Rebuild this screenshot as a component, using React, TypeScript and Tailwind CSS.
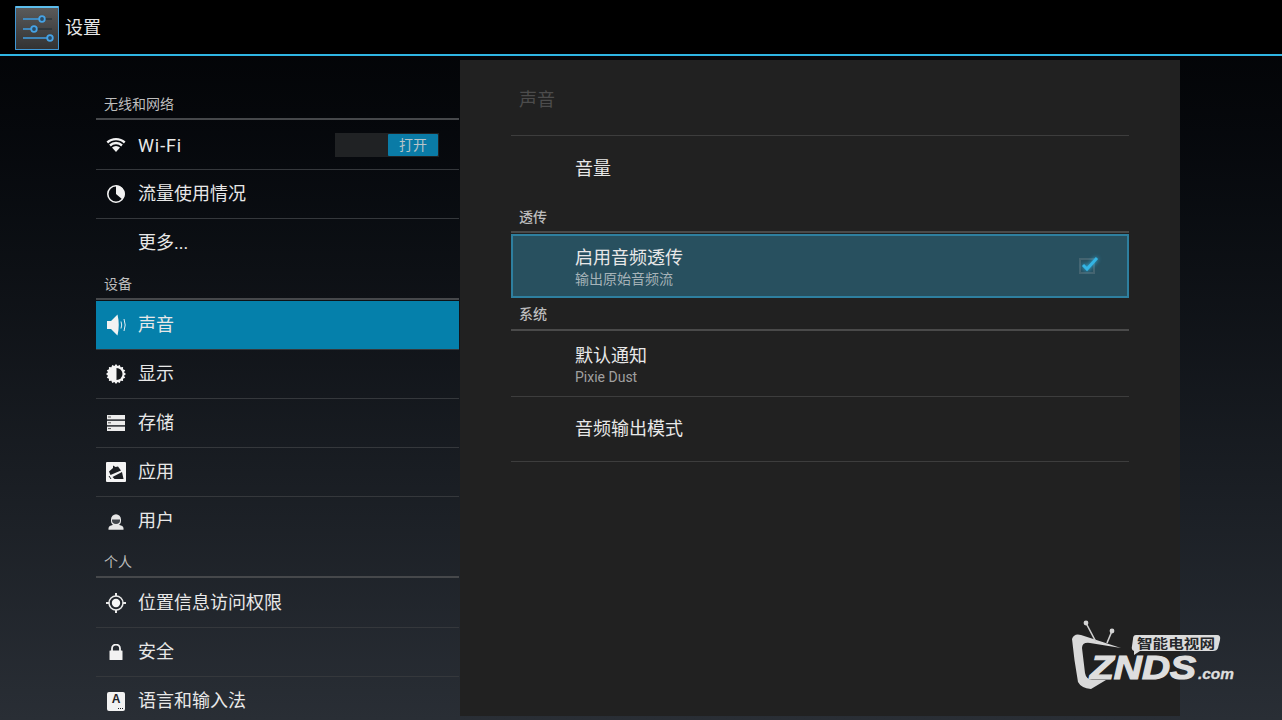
// App.tsx
import type { ReactNode } from 'react';

const cjk = "font-['Roboto','Noto_Sans_CJK_SC',sans-serif]";

function WifiIcon() {
  return (
    <svg width="20" height="16" viewBox="0 0 20 16">
      <path d="M0.5 4.6 A14 14 0 0 1 19.5 4.6 L17.9 6.4 A11.5 11.5 0 0 0 2.1 6.4 Z" fill="#f2f2f2" />
      <path d="M3.2 7.6 A9.6 9.6 0 0 1 16.8 7.6 L15.2 9.4 A7.2 7.2 0 0 0 4.8 9.4 Z" fill="#f2f2f2" />
      <path d="M6 10.6 A5.6 5.6 0 0 1 14 10.6 L10 15 Z" fill="#f2f2f2" />
    </svg>
  );
}

function DataIcon() {
  return (
    <svg width="20" height="20" viewBox="0 0 20 20">
      <circle cx="10" cy="10" r="8.2" fill="none" stroke="#f2f2f2" strokeWidth="1.6" />
      <path d="M10 1.5 A8.5 8.5 0 0 1 16.5 15.5 L10 10 Z" fill="#f2f2f2" />
    </svg>
  );
}

function SoundIcon() {
  return (
    <svg width="22" height="24" viewBox="0 0 22 24">
      <path d="M2 8 H6 L12.5 1.5 Q15 12 12.5 22.5 L6 16 H2 Z" fill="#f2f2f2" />
      <path d="M16 8.5 Q17.4 12 16 15.5" fill="none" stroke="#e4eef3" strokeWidth="1" />
      <path d="M19 6 Q21.4 12 19 18" fill="none" stroke="#e4eef3" strokeWidth="1" />
    </svg>
  );
}

function DisplayIcon() {
  return (
    <svg width="20" height="20" viewBox="0 0 20 20">
      <path
        d="M10 0 L11.6 2 L13.8 .9 L14.6 3.2 L17.1 2.9 L17 5.3 L19.2 6.2 L18 8.3 L20 10 L18 11.7 L19.2 13.8 L17 14.7 L17.1 17.1 L14.6 16.8 L13.8 19.1 L11.6 18 L10 20 L8.4 18 L6.2 19.1 L5.4 16.8 L2.9 17.1 L3 14.7 L.8 13.8 L2 11.7 L0 10 L2 8.3 L.8 6.2 L3 5.3 L2.9 2.9 L5.4 3.2 L6.2 .9 L8.4 2 Z"
        fill="#f4f4f4"
      />
      <path d="M10.5 4 A6 6 0 0 1 10.5 16 Z" fill="#15181b" />
    </svg>
  );
}

function StorageIcon() {
  return (
    <svg width="18" height="16" viewBox="0 0 18 16">
      <rect x="0" y="0" width="18" height="4.4" fill="#ececec" />
      <rect x="0" y="5.8" width="18" height="4.4" fill="#ececec" />
      <rect x="0" y="11.6" width="18" height="4.4" fill="#ececec" />
      <rect x="1" y="1.5" width="3" height="1" fill="#555" />
      <rect x="1" y="7.3" width="3" height="1" fill="#555" />
      <rect x="1" y="13.1" width="3" height="1" fill="#555" />
    </svg>
  );
}

function AppsIcon() {
  return (
    <svg width="20" height="20" viewBox="0 0 20 20">
      <rect x="0" y="0" width="20" height="20" rx="1" fill="#f4f4f4" />
      <path d="M3 9.5 L7 6 L7 3.5 L9.5 5 L12 4.5 L15 8.5 L4.5 13 Z" fill="#1c1f23" />
      <path d="M6.5 15 L16 10 L17.5 17 L8.5 17 Z" fill="#1c1f23" />
      <path d="M3 14 L5 17" stroke="#1c1f23" strokeWidth="1" />
    </svg>
  );
}

function UserIcon() {
  return (
    <svg width="16" height="17" viewBox="0 0 16 17">
      <path d="M3 6.5 A5 5.2 0 0 1 13 6.5 L13 8 A5 5 0 0 1 3 8 Z" fill="#e6e6e6" />
      <path d="M4 6.5 H12 V7.5 A4 3.4 0 0 1 4 7.5 Z" fill="#40444a" />
      <path d="M0.5 16.8 L0.5 15 Q1 12.6 4.6 12 L11.4 12 Q15 12.6 15.5 15 L15.5 16.8 Z" fill="#e6e6e6" />
    </svg>
  );
}

function LocationIcon() {
  return (
    <svg width="20" height="20" viewBox="0 0 20 20">
      <circle cx="10" cy="10" r="7" fill="none" stroke="#e8e8e8" strokeWidth="1.5" />
      <circle cx="10" cy="10" r="4.2" fill="#f6f6f6" />
      <path d="M10 0 V3.2 M10 16.8 V20 M0 10 H3.2 M16.8 10 H20" stroke="#e8e8e8" strokeWidth="2" />
    </svg>
  );
}

function LockIcon() {
  return (
    <svg width="14" height="16" viewBox="0 0 14 16">
      <path d="M3 7 V4.5 A4 4 0 0 1 11 4.5 V7" fill="none" stroke="#f2f2f2" strokeWidth="1.8" />
      <rect x="0.5" y="6.5" width="13" height="9.5" rx="0.5" fill="#f2f2f2" />
    </svg>
  );
}

function LanguageIcon() {
  return (
    <div className="relative flex h-[19px] w-[18px] items-start justify-center rounded-[2px] bg-[#f2f2f2]">
      <span className="mt-[1px] font-['Liberation_Sans',sans-serif] text-[12px] leading-[12px] font-bold text-[#1d2126]">
        A
      </span>
      <div className="absolute right-[2px] bottom-[2px] flex gap-[1px]">
        <div className="h-[1px] w-[1px] bg-[#1d2126]" />
        <div className="h-[1px] w-[1px] bg-[#1d2126]" />
        <div className="h-[1px] w-[1px] bg-[#1d2126]" />
      </div>
    </div>
  );
}

function SideHeader({ title }: { title: string }) {
  return (
    <div className="mb-px flex h-[32px] items-center border-b-2 border-[#46484b] pl-[8px] pt-[3px]">
      <span className="text-[14px] text-[#bdbdbd]">{title}</span>
    </div>
  );
}

function SideRow({
  icon,
  label,
  active,
  last,
  children,
}: {
  icon?: ReactNode;
  label: string;
  active?: boolean;
  last?: boolean;
  children?: ReactNode;
}) {
  const latin = label === 'Wi-Fi';
  return (
    <div
      className={`flex h-[49px] items-center ${last ? '' : 'border-b border-[#35383c]'} ${
        active ? 'bg-[#0580ab]' : ''
      }`}
    >
      <div className="mr-[2px] flex w-[40px] items-center justify-center">{icon}</div>
      <span className={`text-[18px] text-[#e8e8e8] ${latin ? 'tracking-[0.9px]' : 'pb-[2px]'}`}>{label}</span>
      {children}
    </div>
  );
}

function ZndsLogo() {
  return (
    <svg className="absolute top-[600px] left-[1050px]" width="232" height="120" viewBox="0 0 232 120">
      <path
        d="M22 39 Q24 33 31 35 L71 48 L40 43 Q32 42 32 48 L35 73 Q36 79 42 80 L56 80 L41 89 Q31 88 28 82 Q24 60 22 39 Z"
        fill="#d9d9d9"
      />
      <path d="M36 23 L46 42 M62 31 L57 43" stroke="#cfcfcf" strokeWidth="1.6" />
      <circle cx="36" cy="23" r="2.4" fill="#d4d4d4" />
      <circle cx="62" cy="31" r="2.4" fill="#d4d4d4" />
      <path
        d="M86 35 H167 Q171 35 170 40 L168 48 Q167 51 163 51 H90 L84 55 L84 51 Q81 50 82 46 L83 39 Q83 35 86 35 Z"
        fill="#dcdcdc"
      />
      <text
        x="87"
        y="48"
        fill="#26282b"
        className="font-['Noto_Sans_CJK_SC',sans-serif] text-[13px] font-bold"
        textLength="78"
        lengthAdjust="spacingAndGlyphs"
      >
        智能电视网
      </text>
      <text
        x="40"
        y="79"
        fill="#dedede"
        stroke="#dedede"
        strokeWidth="1.2"
        className="font-['Liberation_Sans',sans-serif] text-[33px] font-bold italic"
        textLength="106"
        lengthAdjust="spacingAndGlyphs"
      >
        ZNDS
      </text>
      <text
        x="148"
        y="79"
        fill="#dedede"
        stroke="#dedede"
        strokeWidth="0.3"
        className="font-['Liberation_Sans',sans-serif] text-[15px] font-bold italic"
        textLength="36"
        lengthAdjust="spacingAndGlyphs"
      >
        .com
      </text>
    </svg>
  );
}

export default function App() {
  return (
    <div className={`relative h-[720px] w-[1282px] overflow-hidden bg-gradient-to-b from-[#020305] to-[#292e35] ${cjk}`}>
      {/* action bar */}
      <div className="flex h-[56px] items-start border-b-2 border-[#2fb5e3] bg-black">
        <div className="mt-[6px] ml-[15px] h-[44px] w-[44px] rounded-[1px] border border-t-2 border-[#3f97d4] border-t-[#5cbdec] bg-gradient-to-b from-[#5a5a5a] to-[#333333]">
          <svg width="42" height="41" viewBox="0 0 42 41">
            <path d="M7 11 H36 M7 21 H36 M7 30 H36" stroke="#1d2a33" strokeWidth="1" />
            <path d="M7 11 H26 M7 21 H18 M7 30 H34" stroke="#45a3e6" strokeWidth="1.4" />
            <circle cx="26" cy="11" r="2.8" fill="#2b4a63" stroke="#45a3e6" strokeWidth="1.8" />
            <circle cx="18" cy="21" r="2.8" fill="#2b4a63" stroke="#45a3e6" strokeWidth="1.8" />
            <circle cx="34" cy="30" r="2.8" fill="#2b4a63" stroke="#45a3e6" strokeWidth="1.8" />
          </svg>
        </div>
        <span className="mt-[16px] ml-[6px] text-[18px] leading-[24px] text-[#e6e6e6]">设置</span>
      </div>

      <div className="flex pl-[96px]">
        {/* settings list */}
        <div className="h-[664px] w-[363px] overflow-hidden pt-[32px]">
          <SideHeader title="无线和网络" />
          <SideRow icon={<WifiIcon />} label="Wi-Fi">
            <div className="mr-[20px] ml-auto flex h-[24px] w-[104px] items-stretch justify-end bg-[#202224]">
              <div className="m-[1px] flex w-[50px] items-center justify-center rounded-[1px] bg-[#0a7ba6] text-[14px] text-[#b8c4c8]">
                打开
              </div>
            </div>
          </SideRow>
          <SideRow icon={<DataIcon />} label="流量使用情况" />
          <SideRow label="更多..." last />
          <SideHeader title="设备" />
          <SideRow icon={<SoundIcon />} label="声音" active />
          <SideRow icon={<DisplayIcon />} label="显示" />
          <SideRow icon={<StorageIcon />} label="存储" />
          <SideRow icon={<AppsIcon />} label="应用" />
          <SideRow icon={<UserIcon />} label="用户" last />
          <SideHeader title="个人" />
          <SideRow icon={<LocationIcon />} label="位置信息访问权限" />
          <SideRow icon={<LockIcon />} label="安全" />
          <SideRow icon={<LanguageIcon />} label="语言和输入法" last />
        </div>

        {/* detail panel */}
        <div className="mt-[4px] ml-px h-[656px] w-[720px] bg-[#212121] pr-[51px] pl-[51px]">
          <div className="flex h-[76px] items-center border-b border-[#3d3d3d] pl-[8px] pt-[4px]">
            <span className="text-[18px] text-[#4c4c4c]">声音</span>
          </div>
          <div className="flex h-[65px] items-center pl-[64px]">
            <span className="text-[18px] text-[#e8e8e8]">音量</span>
          </div>
          <div className="flex h-[32px] items-center border-b-2 border-[#4a4a4a] pl-[8px] pt-[2px]">
            <span className="text-[14px] font-medium text-[#bdbdbd]">透传</span>
          </div>
          <div className="mt-px flex h-[64px] items-center justify-between border-2 border-[#2e7f9f] bg-[#28505f] pr-[32px] pl-[62px]">
            <div className="flex flex-col pt-[2px]">
              <span className="text-[18px] leading-[24px] text-[#e8e8e8]">启用音频透传</span>
              <span className="-mt-[1px] text-[14px] leading-[20px] text-[#a6b3b8]">输出原始音频流</span>
            </div>
            <div className="relative h-[16px] w-[16px] border-2 border-[#456470]">
              <svg
                className="absolute -top-[4px] -left-[2px] drop-shadow-[0_0_2px_#33b5e5]"
                width="20"
                height="18"
                viewBox="0 0 20 18"
              >
                <path d="M4 9 L8 13 L18 2" fill="none" stroke="#33b5e5" strokeWidth="3" />
              </svg>
            </div>
          </div>
          <div className="flex h-[33px] items-center border-b-2 border-[#4a4a4a] pl-[8px] pt-[2px]">
            <span className="text-[14px] font-medium text-[#bdbdbd]">系统</span>
          </div>
          <div className="flex h-[66px] flex-col justify-center border-b border-[#3d3d3d] pl-[64px] pt-[4px]">
            <span className="text-[18px] leading-[24px] text-[#e8e8e8]">默认通知</span>
            <span className="-mt-[1px] text-[14px] leading-[20px] text-[#a0a0a0]">Pixie Dust</span>
          </div>
          <div className="flex h-[65px] items-center border-b border-[#3d3d3d] pb-[2px] pl-[64px]">
            <span className="text-[18px] text-[#e8e8e8]">音频输出模式</span>
          </div>
        </div>
      </div>

      <ZndsLogo />
    </div>
  );
}
